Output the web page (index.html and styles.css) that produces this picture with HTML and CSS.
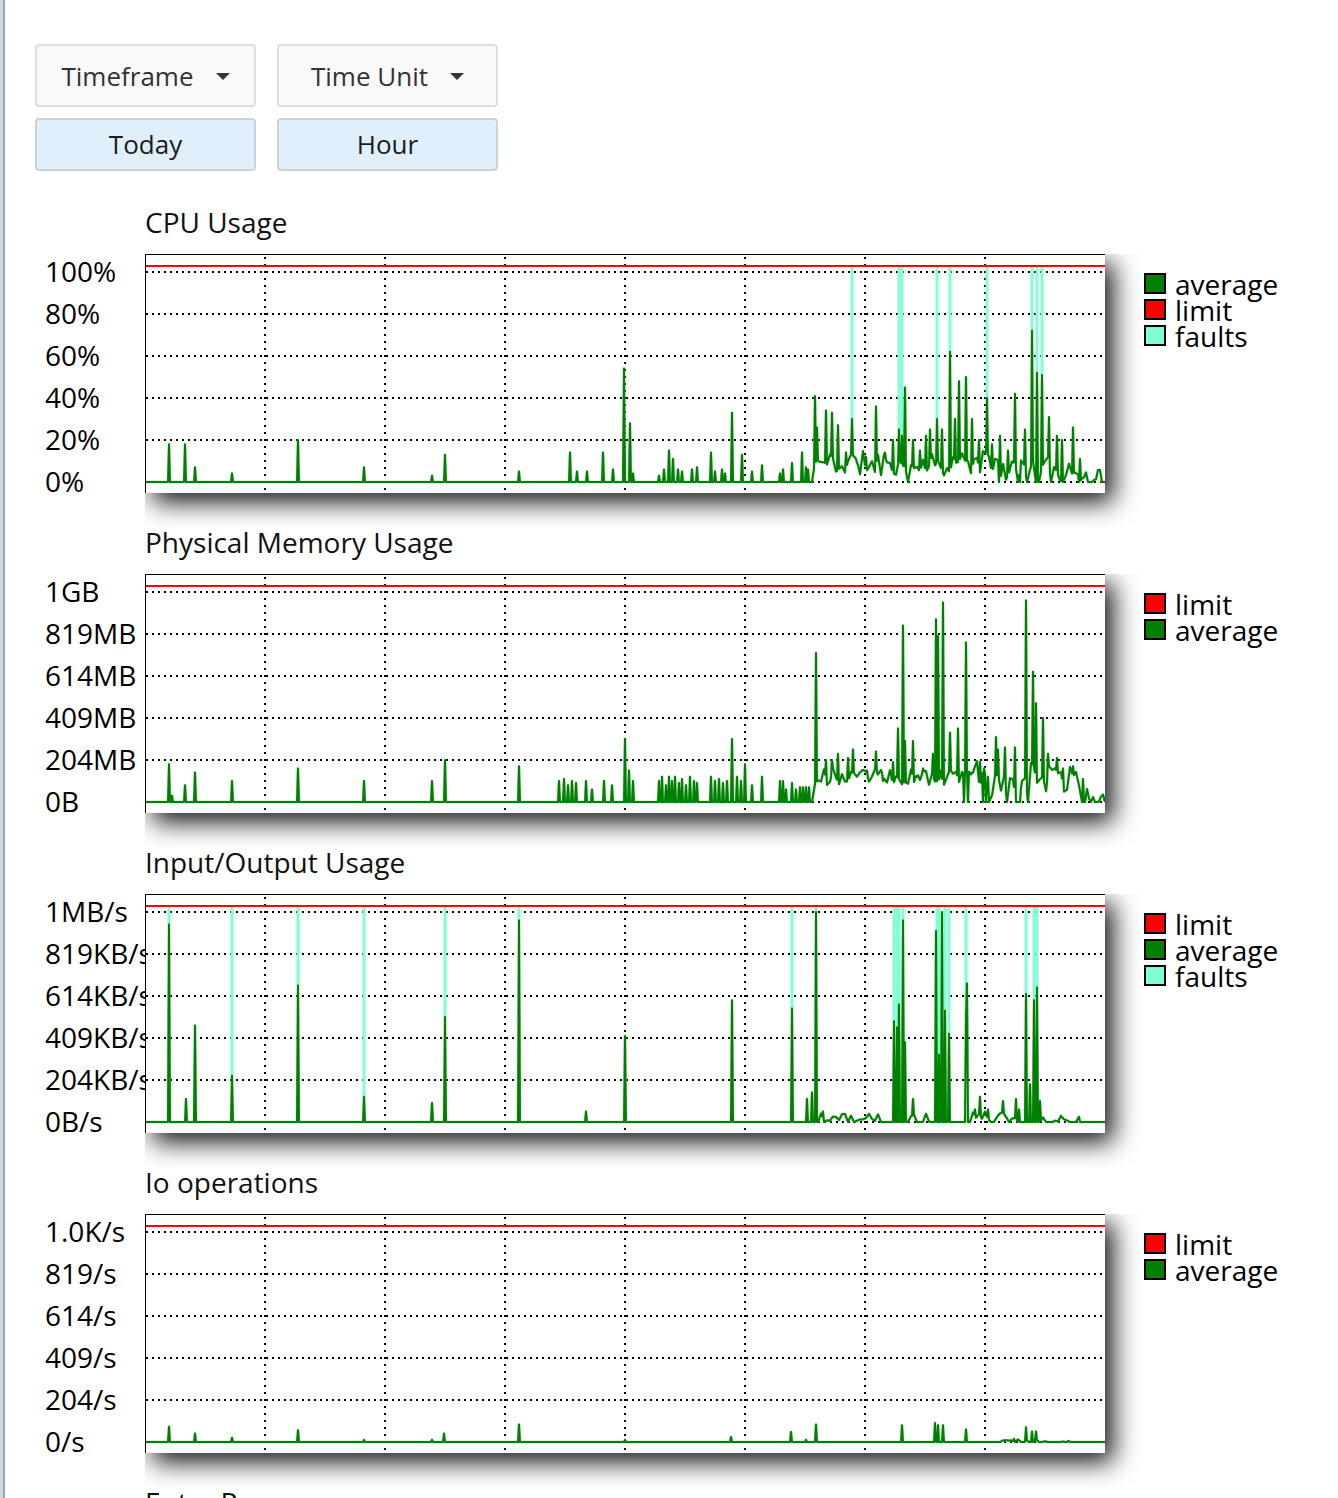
FILE: index.html
```html
<!DOCTYPE html>
<html lang="en">
<head>
<meta charset="utf-8">
<title>Resource Usage</title>
<link rel="stylesheet" href="styles.css">
</head>
<body>
<div class="page">
  <div class="controls">
    <button class="dropdown" type="button"><span>Timeframe</span><span class="caret"></span></button>
    <button class="dropdown" type="button"><span>Time Unit</span><span class="caret"></span></button>
    <div class="selected">Today</div>
    <div class="selected">Hour</div>
  </div>

  <div class="charts">
    <section class="chart">
      <h2 class="chart-title">CPU Usage</h2>
      <div class="chart-row">
        <div class="axis"><span>100%</span><span>80%</span><span>60%</span><span>40%</span><span>20%</span><span>0%</span></div>
        <div class="plot-clip"><div class="plot" data-chart="cpu"></div></div>
        <ul class="legend">
          <li><span class="swatch sw-avg"></span>average</li>
          <li><span class="swatch sw-limit"></span>limit</li>
          <li><span class="swatch sw-fault"></span>faults</li>
        </ul>
      </div>
    </section>

    <section class="chart">
      <h2 class="chart-title">Physical Memory Usage</h2>
      <div class="chart-row">
        <div class="axis"><span>1GB</span><span>819MB</span><span>614MB</span><span>409MB</span><span>204MB</span><span>0B</span></div>
        <div class="plot-clip"><div class="plot" data-chart="mem"></div></div>
        <ul class="legend">
          <li><span class="swatch sw-limit"></span>limit</li>
          <li><span class="swatch sw-avg"></span>average</li>
        </ul>
      </div>
    </section>

    <section class="chart">
      <h2 class="chart-title">Input/Output Usage</h2>
      <div class="chart-row">
        <div class="axis"><span>1MB/s</span><span>819KB/s</span><span>614KB/s</span><span>409KB/s</span><span>204KB/s</span><span>0B/s</span></div>
        <div class="plot-clip"><div class="plot" data-chart="io"></div></div>
        <ul class="legend">
          <li><span class="swatch sw-limit"></span>limit</li>
          <li><span class="swatch sw-avg"></span>average</li>
          <li><span class="swatch sw-fault"></span>faults</li>
        </ul>
      </div>
    </section>

    <section class="chart">
      <h2 class="chart-title">Io operations</h2>
      <div class="chart-row">
        <div class="axis"><span>1.0K/s</span><span>819/s</span><span>614/s</span><span>409/s</span><span>204/s</span><span>0/s</span></div>
        <div class="plot-clip"><div class="plot" data-chart="iops"></div></div>
        <ul class="legend">
          <li><span class="swatch sw-limit"></span>limit</li>
          <li><span class="swatch sw-avg"></span>average</li>
        </ul>
      </div>
    </section>

    <section class="chart">
      <h2 class="chart-title">Entry Processes</h2>
      <div class="chart-row">
        <div class="axis"><span>20</span><span>16</span><span>12</span><span>8</span><span>4</span><span>0</span></div>
        <div class="plot-clip"><div class="plot" data-chart="ep"></div></div>
        <ul class="legend">
          <li><span class="swatch sw-limit"></span>limit</li>
          <li><span class="swatch sw-avg"></span>average</li>
        </ul>
      </div>
    </section>
  </div>
</div>
<script src="script.js"></script>
</body>
</html>
```

FILE: styles.css
```css
* { box-sizing: border-box; }
html, body { margin: 0; }
body {
  font-family: "Open Sans", "Noto Sans", sans-serif;
  color: #000;
  background: linear-gradient(to right, #d3d6da 0, #d3d6da 3px, #8ea8c8 3px, #8ea8c8 5px, #fff 5px);
}
.page { padding: 44px 0 0 35px; }

.controls {
  display: grid;
  grid-template-columns: 221px 221px;
  column-gap: 21px;
  row-gap: 11px;
}
.dropdown {
  height: 63px;
  display: flex;
  align-items: center;
  justify-content: center;
  gap: 22px;
  margin: 0;
  padding: 0;
  border: 2px solid #dedede;
  border-radius: 4px;
  background: #f9f9f9;
  color: #333;
  font: 26px/1 "Open Sans", "Noto Sans", sans-serif;
}
.caret {
  width: 0;
  height: 0;
  margin-top: 2px;
  border-left: 7px solid transparent;
  border-right: 7px solid transparent;
  border-top: 7px solid #333;
}
.selected {
  height: 53px;
  display: flex;
  align-items: center;
  justify-content: center;
  padding-bottom: 2px;
  border: 2px solid #cdd2d6;
  border-radius: 4px;
  background: #dff0fc;
  color: #1c1c1c;
  font-size: 26px;
}

.charts { margin-top: 36px; }
.chart-title {
  margin: 0 0 17px 110px;
  font-size: 28px;
  line-height: 30px;
  font-weight: 400;
  color: #111;
}
.chart-row {
  display: flex;
  align-items: flex-start;
  height: 273px;
}
.axis {
  flex: none;
  width: 100px;
  margin: -4px 0 0 10px;
  overflow: hidden;
  font-size: 28px;
  line-height: 42px;
  white-space: nowrap;
}
.axis span { display: block; height: 42px; }
.plot-clip {
  flex: none;
  width: 999px;
  height: 273px;
  overflow: hidden;
}
.plot {
  width: 960px;
  height: 239px;
  background: #fff;
  border-top: 1px solid #000;
  border-left: 1px solid #000;
  box-shadow: 8px 9px 24px rgba(0, 0, 0, 0.92);
}
.plot-svg { display: block; }
.plot-svg .grid { stroke: #000; stroke-width: 2; stroke-dasharray: 2 4; }
.plot-svg .vgrid { stroke-dasharray: 2 5; }
.plot-svg .limit { stroke: #f00; stroke-width: 2; }
.plot-svg .fault { stroke: #7fffd4; stroke-width: 3; }
.plot-svg .avg-halo { fill: none; stroke: #7fbf7f; stroke-width: 3; stroke-linejoin: round; opacity: 0.5; }
.plot-svg .avg { fill: none; stroke: #008000; stroke-width: 2; stroke-linejoin: round; }

.legend {
  list-style: none;
  margin: 17px 0 0;
  padding: 0;
  font-size: 28px;
  line-height: 26px;
}
.legend li {
  display: flex;
  align-items: flex-start;
  height: 26px;
  white-space: nowrap;
}
.swatch {
  flex: none;
  width: 22px;
  height: 21px;
  margin: 2px 9px 0 0;
  border: 2px solid #000;
}
.sw-avg { background: #008000; }
.sw-limit { background: #f00; }
.sw-fault { background: #7fffd4; }
```

FILE: script.js
```js
(function () {
  var X0 = 146, X1 = 1105;

  function mulberry32(a) {
    return function () {
      a |= 0; a = a + 0x6D2B79F5 | 0;
      var t = Math.imul(a ^ a >>> 15, 1 | a);
      t = t + Math.imul(t ^ t >>> 7, 61 | t) ^ t;
      return ((t ^ t >>> 14) >>> 0) / 4294967296;
    };
  }

  function y(p) { return 228 - p * 2.1; }

  function series(cfg) {
    var rnd = mulberry32(cfg.seed || 7);
    var v = [];
    for (var i = 0; i <= X1 - X0; i++) v.push(0);
    function set(x, p) { if (x >= X0 && x <= X1) v[x - X0] = p; }
    function get(x) { return v[Math.max(X0, Math.min(X1, x)) - X0]; }
    (cfg.noise || []).forEach(function (r) {
      var step = r[5] || 3, px = r[0], pv = get(r[0]);
      for (var x = r[0] + step; x <= r[1]; x += step) {
        var val = rnd() < r[4] ? 0 : r[2] + rnd() * (r[3] - r[2]);
        for (var k = px + 1; k <= x; k++) set(k, pv + (val - pv) * (k - px) / (x - px));
        px = x; pv = val;
      }
    });
    (cfg.spikes || []).forEach(function (s) { set(s[0], s[1]); });
    return { v: v, get: get };
  }

  function svgFor(cfg) {
    var d = series(cfg);
    var s = '<svg class="plot-svg" xmlns="http://www.w3.org/2000/svg" width="959" height="238" viewBox="146 1 959 238">';
    [18, 60, 102, 144, 186, 228].forEach(function (r) {
      s += '<line class="grid" x1="146" x2="1105" y1="' + r + '" y2="' + r + '"/>';
    });
    for (var x = 265; x < 1105; x += 120) {
      s += '<line class="grid vgrid" x1="' + x + '" x2="' + x + '" y1="3" y2="239"/>';
    }
    (cfg.faults || []).forEach(function (fx) {
      s += '<line class="fault" x1="' + fx + '" x2="' + fx + '" y1="12" y2="' + y(d.get(fx)).toFixed(1) + '"/>';
    });
    s += '<line class="limit" x1="146" x2="1105" y1="12" y2="12"/>';
    var pts = [];
    for (var i = 0; i < d.v.length; i++) pts.push((X0 + i) + ',' + y(d.v[i]).toFixed(1));
    s += '<polyline class="avg-halo" points="' + pts.join(' ') + '"/>';
    s += '<polyline class="avg" points="' + pts.join(' ') + '"/>';
    return s + '</svg>';
  }

  var charts = {
    cpu: {
      seed: 11,
      noise: [[812, 1000, 3, 15, 0.06, 3], [1000, 1080, 0, 12, 0.15, 3], [1080, 1105, 0, 7, 0.35, 2]],
      spikes: [[169,18],[185,18],[195,7],[232,4],[298,20],[364,7],[432,3],[445,13],[519,5],[570,14],[577,5],[587,5],[603,14],[613,6],[624,54],[630,28],[633,4],[659,3],[664,6],[669,15],[673,11],[678,6],[682,5],[692,6],[697,7],[711,14],[715,5],[722,6],[725,4],[732,33],[742,13],[752,5],[762,8],[780,4],[783,6],[792,9],[802,14],[806,7],[808,6],
        [815,41],[817,26],[826,34],[832,33],[838,27],[846,14],[852,30],[857,9],[866,12],[876,36],[885,14],[893,20],[899,25],[902,22],[905,45],[913,20],[920,15],[926,22],[930,25],[937,30],[942,25],[950,62],[955,30],[959,48],[966,50],[972,30],[979,20],[987,40],[992,18],[1000,22],[1008,15],[1015,42],[1020,0],[1025,25],[1032,72],[1037,52],[1042,51],[1049,31],[1057,22],[1062,20],[1073,26],[1080,11]],
      faults: [852, 899, 902, 937, 950, 987, 1032, 1037, 1042]
    },
    mem: {
      seed: 23,
      noise: [[812, 962, 8, 16, 0, 3], [962, 1085, 3, 20, 0.12, 3], [1085, 1105, 0, 9, 0.4, 2]],
      spikes: [[169,18],[172,3],[185,8],[195,14],[232,10],[298,16],[364,10],[432,10],[445,20],[519,17],[559,10],[564,11],[568,8],[572,10],[576,9],[586,10],[592,6],[604,10],[612,8],[625,30],[629,15],[633,10],[659,10],[662,12],[666,8],[669,12],[672,10],[675,12],[679,9],[682,11],[686,8],[690,12],[694,10],[697,9],[711,12],[715,10],[719,11],[723,9],[727,10],[732,30],[737,12],[741,10],[745,18],[752,8],[762,12],[780,10],[783,10],[786,6],[792,9],[796,6],[800,7],[803,7],[806,7],[809,7],
        [816,71],[826,20],[832,20],[838,23],[848,21],[853,25],[867,15],[876,24],[883,10],[893,19],[898,35],[903,84],[905,29],[913,29],[917,12],[923,16],[933,23],[936,87],[938,79],[940,15],[943,95],[950,33],[958,35],[964,0],[966,76],[968,0],[973,14],[980,19],[983,0],[986,0],[988,12],[996,31],[998,25],[1005,26],[1015,26],[1020,0],[1026,96],[1033,62],[1036,47],[1043,40],[1048,23],[1057,21],[1063,16],[1073,17],[1083,11]]
    },
    io: {
      seed: 37,
      noise: [[818, 885, 0, 4, 0.3, 3], [908, 932, 0, 4, 0.3, 3], [970, 1022, 0, 5, 0.3, 3], [1040, 1080, 0, 3, 0.3, 3]],
      spikes: [[169,94],[186,11],[195,46],[232,22],[298,65],[364,12],[432,9],[445,50],[519,96],[586,5],[625,41],[732,58],[792,54],[807,11],[812,14],[816,100],[823,5],
        [894,48],[897,45],[899,56],[903,96],[905,38],[913,11],[936,91],[939,32],[942,100],[945,53],[949,42],[966,50],[967,66],[975,6],[980,12],[988,6],[1003,10],[1016,11],[1019,6],[1026,61],[1030,18],[1034,58],[1037,64],[1040,10]],
      faults: [169, 232, 298, 364, 445, 519, 792, 816, 894, 897, 899, 903, 937, 939, 945, 949, 966, 1026, 1034, 1037]
    },
    iops: {
      seed: 41,
      noise: [[1000, 1045, 0, 1.5, 0.5, 3], [1045, 1070, 0, 1, 0.5, 3]],
      spikes: [[169,7.3],[195,4],[232,2],[298,5.6],[364,1],[432,1],[444,4],[519,8.4],[625,1],[731,2.4],[791,4.8],[806,1],[816,8.4],[902,8],[935,9],[938,8],[943,8],[966,6],[1014,1.5],[1026,7],[1032,5],[1036,5]]
    },
    ep: {
      seed: 53,
      noise: [[812, 1100, 0, 10, 0.4, 3]],
      spikes: [[169,10],[298,10],[445,10],[519,10],[625,15],[732,15],[816,20],[903,25],[942,30],[1026,25]]
    }
  };

  var plots = document.querySelectorAll('.plot[data-chart]');
  for (var i = 0; i < plots.length; i++) {
    var cfg = charts[plots[i].getAttribute('data-chart')];
    if (cfg) plots[i].innerHTML = svgFor(cfg);
  }
})();
```
